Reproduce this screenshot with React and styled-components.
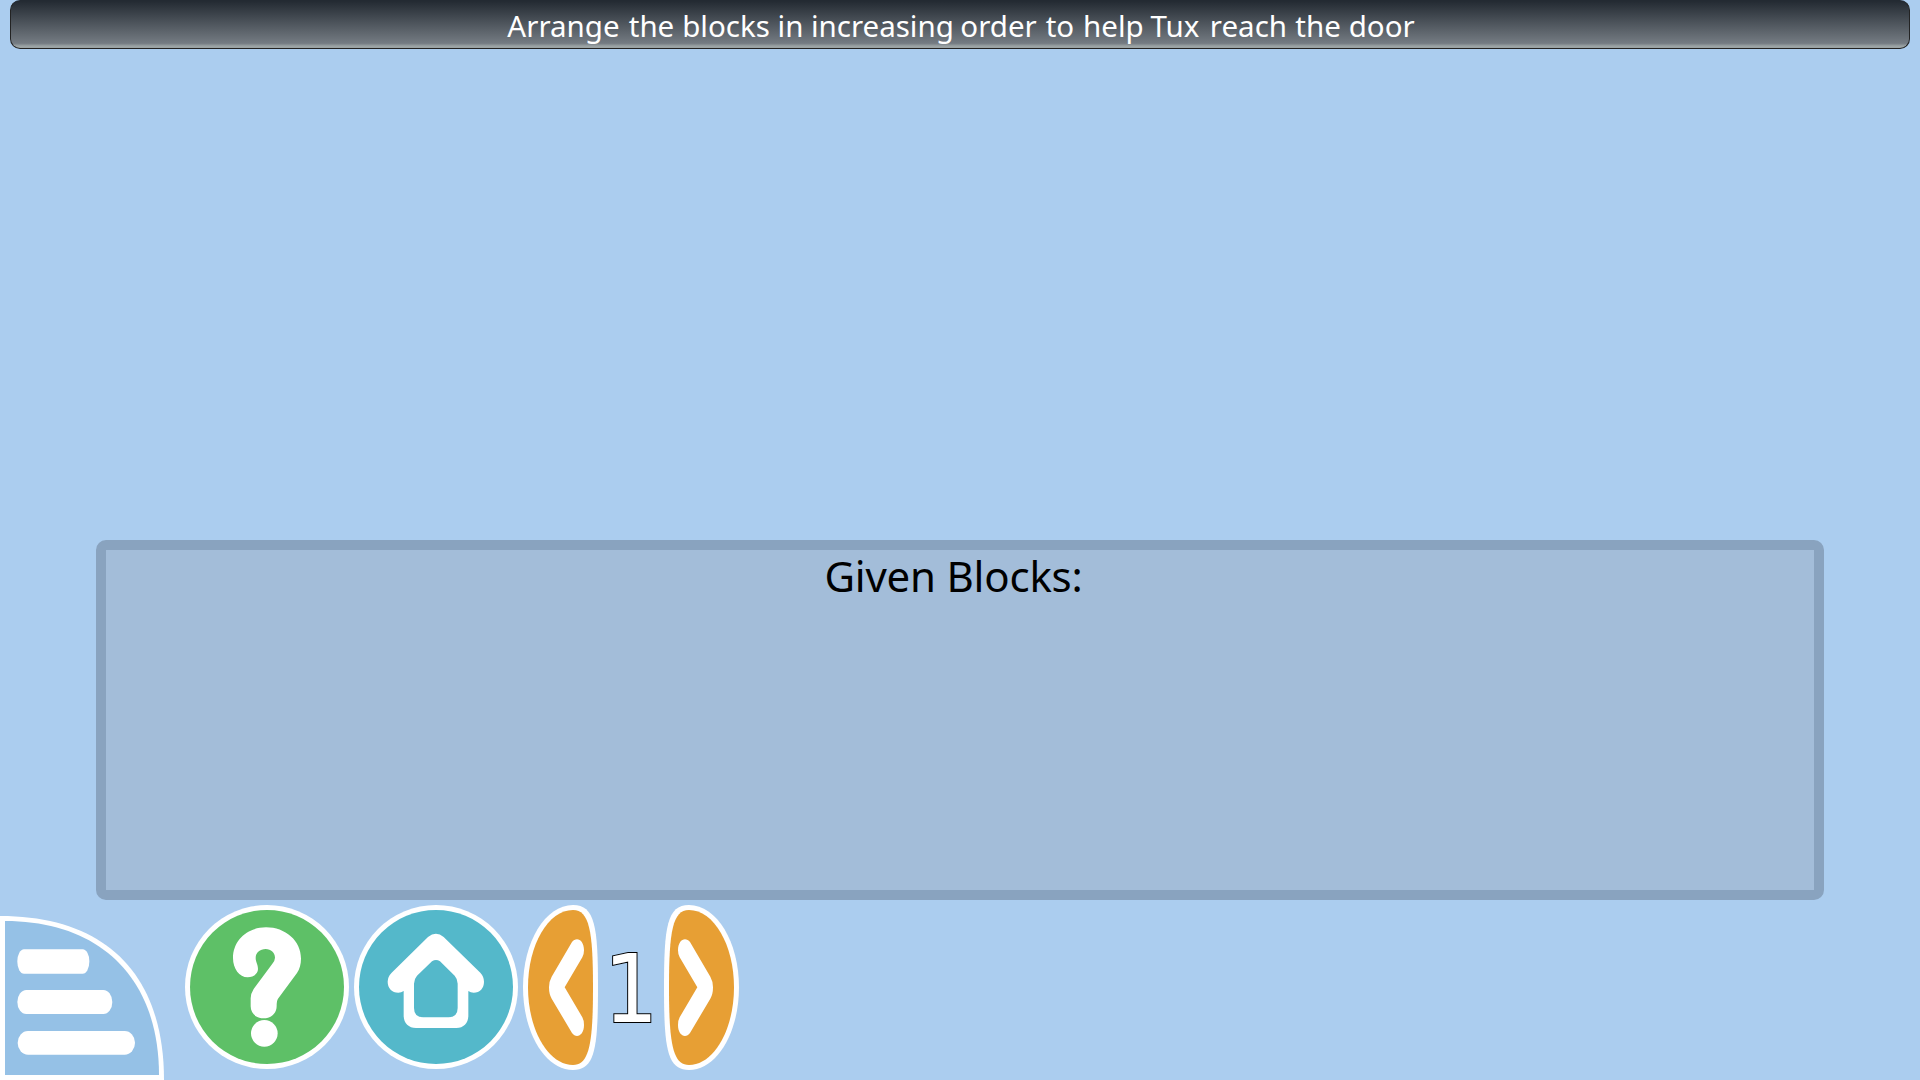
import React from "react";
import styled, { createGlobalStyle } from "styled-components";

const GlobalStyle = createGlobalStyle`
  * { box-sizing: border-box; }
  body { margin: 0; background: #abcdef; }
`;

const Screen = styled.main`
  display: flex;
  flex-direction: column;
  width: 1920px;
  height: 1080px;
  overflow: hidden;
  background: #abcdef;
  font-family: "Noto Sans", "Open Sans", sans-serif;
`;

const Instruction = styled.header`
  display: flex;
  align-items: center;
  justify-content: center;
  gap: ${(p) => p.$gap}px;
  height: 49px;
  margin: 0 10px;
  padding-top: 3px;
  border: 1px solid #232323;
  border-top-color: #232a32;
  border-radius: 10px;
  background: linear-gradient(#232a32 0%, #747b82 90%, #9ba3a4 96%, #9ba3a4 100%);
  color: #fff;
  font-size: 29.5px;
  line-height: 40px;
`;

const Word = styled.span`
  width: ${(p) => p.$width}px;
  letter-spacing: ${(p) => p.$spacing || 0}px;
  white-space: nowrap;
`;

const PlayArea = styled.section`
  flex: 1;
`;

const BlockTray = styled.section`
  display: flex;
  justify-content: center;
  height: 360px;
  margin: 0 96px;
  padding-right: 13px;
  border: 10px solid #89a3bf;
  border-radius: 10px;
  background: #a3bdd9;
`;

const TrayTitle = styled.h1`
  margin: 0;
  color: #000;
  font-size: 42px;
  font-weight: 400;
  line-height: 51px;
  letter-spacing: ${(p) => p.$spacing}px;
`;

const Bar = styled.footer`
  display: flex;
  align-items: flex-start;
  height: 180px;
`;

const BarButton = styled.button`
  display: block;
  width: ${(p) => p.$width}px;
  height: ${(p) => p.$height}px;
  margin: ${(p) => p.$top || 5}px 0 0 ${(p) => p.$left || 0}px;
  padding: 0;
  border: 0;
  background: none;
  svg { display: block; width: 100%; height: 100%; }
`;

const Level = styled.div`
  width: 66px;
  margin-top: 33px;
  color: #fff;
  font-family: "DejaVu Sans Condensed", "DejaVu Sans", sans-serif;
  font-stretch: condensed;
  font-size: 95px;
  line-height: 112px;
  text-align: center;
  -webkit-text-stroke: 2px #000;
  paint-order: stroke fill;
`;

const words = [
  ["Arrange", 112], ["the", 44], ["blocks", 86], ["in", 24], ["increasing", 140], ["order", 76],
  ["to", 28], ["help", 58], ["Tux", 50], ["reach", 76], ["the", 44], ["door", 64],
];

const MenuIcon = () => (
  <svg viewBox="0 48 492 492">
    <path d="M0 48C317 48 492 223 492 540H0Z" fill="#fff" />
    <path d="M15 63C303 63 477 237 477 525H15Z" fill="#95c1e6" />
    <g fill="#fff">
      <rect x="52" y="148" width="216" height="73" rx="20" ry="36" />
      <rect x="52" y="270" width="285" height="72" rx="27" ry="36" />
      <rect x="53" y="393" width="352" height="71" rx="31" ry="35" />
    </g>
  </svg>
);

const HelpIcon = () => (
  <svg viewBox="15 15 492 492">
    <circle cx="261" cy="261" r="246" fill="#fff" />
    <circle cx="261" cy="261" r="231" fill="#5ec067" />
    <path fill="#fff" d="M203 232C178 232 159 206 159 174C159 120 203 82 258 82C316 82 363 122 363 176C363 193 359 207 351 219L294 296Q290 302 290 318C290 340 274 355 251 355C228 355 212 340 212 319V295Q212 281 221 267L276 193Q285 182 285 173C285 158 273 147 257 147C240 147 227 158 227 174C227 187 234 192 234 207C234 222 219 232 203 232Z" />
    <circle cx="253" cy="400" r="40" fill="#fff" />
  </svg>
);

const HomeIcon = () => (
  <svg viewBox="12 15 492 492">
    <circle cx="258" cy="261" r="246" fill="#fff" />
    <circle cx="258" cy="261" r="231" fill="#54b8ca" />
    <path fill="#fff" fillRule="evenodd" d="M234 111Q258 92 281 111L391 218Q402 230 402 245C402 264 390 278 371 278Q362 278 355 273V347C355 369 341 384 319 384H198C176 384 161 369 161 347V273Q154 278 145 278C126 278 113 264 113 245Q113 230 125 218ZM246 184Q258 176 270 184L314 227Q323 237 323 251V324Q323 352 295 352H220Q192 352 192 324V251Q192 237 201 227Z" />
  </svg>
);

const ArrowIcon = ({ next }) => (
  <svg viewBox="24 15 225 495">
    <g transform={next ? "translate(273 0) scale(-1 1)" : undefined}>
      <path d="M174 15C240 15 249 80 249 262S240 510 174 510C91 510 24 399 24 262S91 15 174 15Z" fill="#fff" />
      <path d="M174 30C223 30 234 94 234 262S223 495 174 495C100 495 39 390 39 262S100 30 174 30Z" fill="#e79f34" />
      <path fill="#fff" d="M171 126C184 109 207 118 207 151Q207 163 202 172L149 262L202 352Q207 361 207 375C207 407 184 417 171 399L110 296Q102 283 102 262Q102 244 110 230Z" />
    </g>
  </svg>
);

export default function App() {
  return (
    <>
      <GlobalStyle />
      <Screen>
        <Instruction $gap={9.4}>
          {words.map(([text, width], i) => (
            <Word key={i} $width={width}>{text}</Word>
          ))}
        </Instruction>
        <PlayArea />
        <BlockTray>
          <TrayTitle $spacing={-0.2}>Given Blocks:</TrayTitle>
        </BlockTray>
        <Bar>
          <BarButton $width={164} $height={164} $top={16} aria-label="Menu"><MenuIcon /></BarButton>
          <BarButton $width={164} $height={164} $left={21} aria-label="Help"><HelpIcon /></BarButton>
          <BarButton $width={164} $height={164} $left={5} aria-label="Home"><HomeIcon /></BarButton>
          <BarButton $width={75} $height={165} $left={5} aria-label="Previous level"><ArrowIcon /></BarButton>
          <Level>1</Level>
          <BarButton $width={75} $height={165} aria-label="Next level"><ArrowIcon next /></BarButton>
        </Bar>
      </Screen>
    </>
  );
}
